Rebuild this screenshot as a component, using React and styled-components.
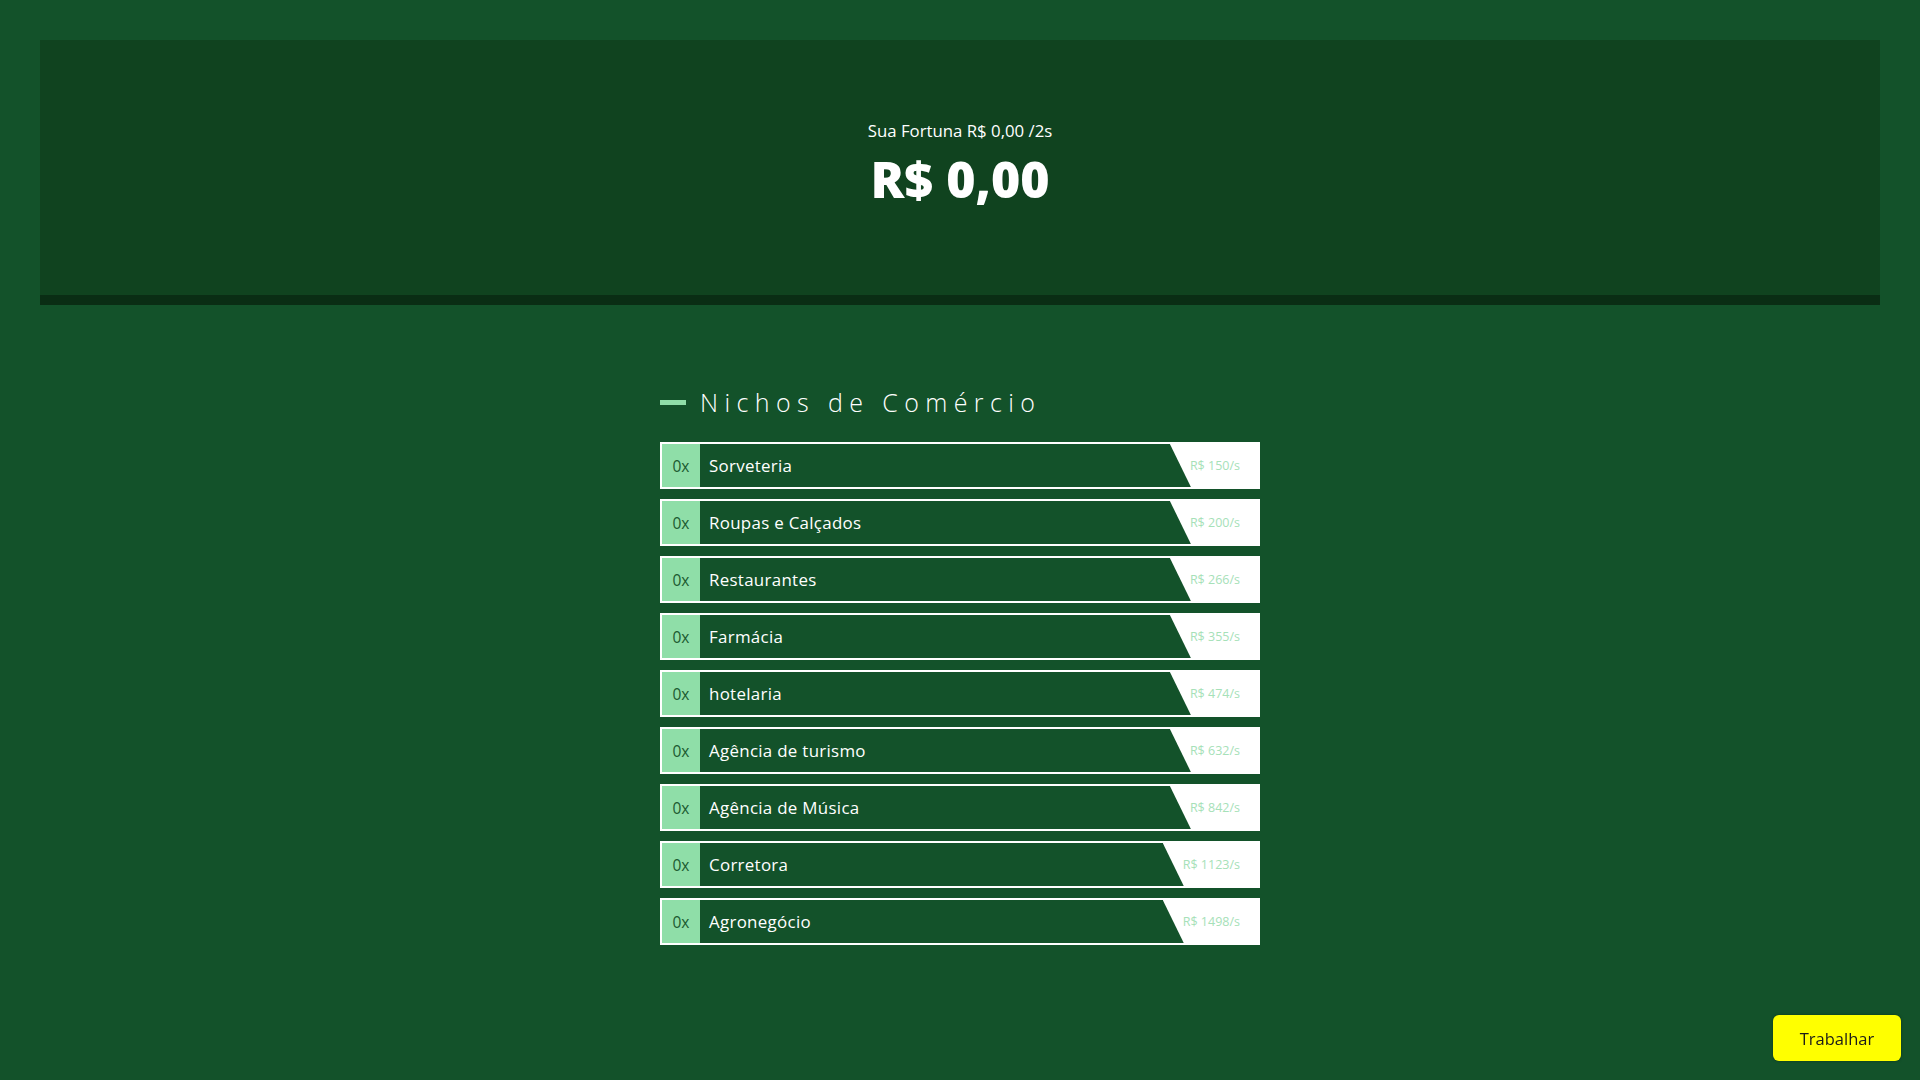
import React from "react";
import styled, { createGlobalStyle } from "styled-components";

const Global = createGlobalStyle`
  html, body { margin: 0; padding: 0; }
  body {
    background: #13522a;
    font-family: "Open Sans", "Noto Sans", sans-serif;
    color: #ffffff;
    min-height: 100vh;
  }
`;

const Page = styled.div`
  padding: 40px 40px 60px;
  box-sizing: border-box;
  min-height: 100vh;
`;

const Panel = styled.header`
  background: #10431f;
  border-bottom: 10px solid #0a2d14;
  height: 265px;
  display: flex;
  flex-direction: column;
  align-items: center;
  padding-top: 80px;
  box-sizing: border-box;
`;

const Rate = styled.div`
  font-size: 16.8px;
  line-height: 22px;
  font-weight: 400;
  color: #ffffff;
`;

const Fortune = styled.div`
  font-size: 50px;
  line-height: 60px;
  font-weight: 800;
  color: #ffffff;
  margin-top: 7px;
`;

const Section = styled.section`
  width: 600px;
  margin: 82px auto 0;
  display: flex;
  flex-direction: column;
`;

const Title = styled.h2`
  margin: 0 0 25px;
  display: flex;
  align-items: center;
  gap: 14px;
  font-size: 25px;
  line-height: 30px;
  font-weight: 300;
  letter-spacing: 6.4px;
  color: #ffffff;
`;

const Dash = styled.span`
  display: block;
  width: 26px;
  height: 5px;
  background: #8fdea8;
`;

const List = styled.div`
  display: flex;
  flex-direction: column;
  gap: 10px;
`;

const Row = styled.div`
  display: flex;
  height: 47px;
  box-sizing: border-box;
  border: 2px solid #ffffff;
  background: #ffffff;
`;

const Count = styled.div`
  width: 38px;
  flex: none;
  background: #8fdea8;
  color: #1b5a30;
  display: flex;
  align-items: center;
  justify-content: center;
  font-size: 15.5px;
  font-weight: 400;
`;

const Name = styled.div`
  flex: 1;
  background: #13522a;
  display: flex;
  align-items: center;
  padding-left: 9px;
  font-size: 16.9px;
  letter-spacing: 0.3px;
  font-weight: 500;
  color: #ffffff;
`;

const Price = styled.div`
  position: relative;
  flex: none;
  background: #13522a;
  display: flex;
  align-items: center;
  padding: 0 18px 0 20px;
  font-size: 12.5px;
  color: #a6e1b8;
  &::before {
    content: "";
    position: absolute;
    inset: 0;
    background: #ffffff;
    clip-path: polygon(0 0, 100% 0, 100% 100%, 21px 100%);
  }
`;

const PriceText = styled.span`
  position: relative;
`;

const WorkButton = styled.button`
  position: fixed;
  right: 19px;
  bottom: 19px;
  width: 128px;
  height: 46px;
  border: none;
  border-radius: 6px;
  background: #ffff00;
  color: #1b1b1b;
  font-family: "Open Sans", "Noto Sans", sans-serif;
  font-size: 16.5px;
  font-weight: 400;
  cursor: pointer;
  box-shadow: 0 0 3px rgba(0, 0, 0, 0.35);
`;

const niches = [
  { name: "Sorveteria", price: 150 },
  { name: "Roupas e Calçados", price: 200 },
  { name: "Restaurantes", price: 266 },
  { name: "Farmácia", price: 355 },
  { name: "hotelaria", price: 474 },
  { name: "Agência de turismo", price: 632 },
  { name: "Agência de Música", price: 842 },
  { name: "Corretora", price: 1123 },
  { name: "Agronegócio", price: 1498 },
];

export default function App() {
  return (
    <>
      <Global />
      <Page>
        <Panel>
          <Rate>Sua Fortuna R$ 0,00 /2s</Rate>
          <Fortune>R$ 0,00</Fortune>
        </Panel>
        <Section>
          <Title>
            <Dash />
            Nichos de Comércio
          </Title>
          <List>
            {niches.map((n) => (
              <Row key={n.name}>
                <Count>0x</Count>
                <Name>{n.name}</Name>
                <Price>
                  <PriceText>R$ {n.price}/s</PriceText>
                </Price>
              </Row>
            ))}
          </List>
        </Section>
      </Page>
      <WorkButton>Trabalhar</WorkButton>
    </>
  );
}
